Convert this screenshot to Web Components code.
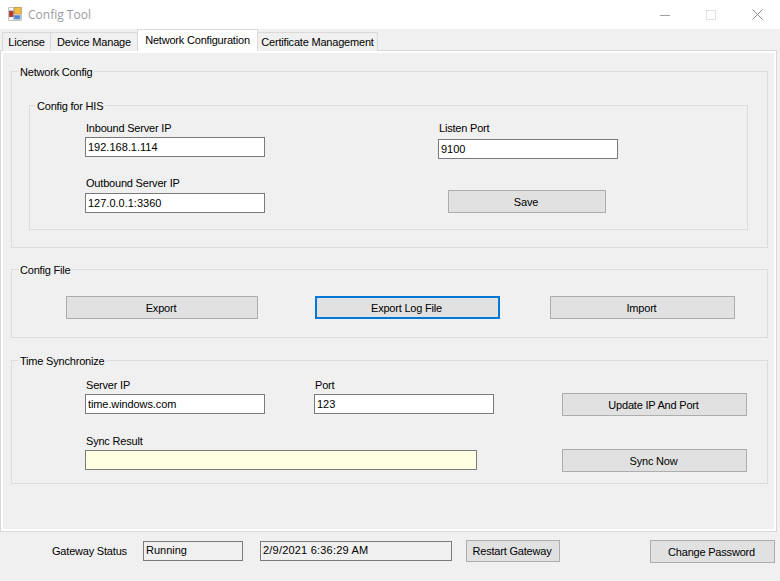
<!DOCTYPE html>
<html>
<head>
<meta charset="utf-8">
<title>Config Tool</title>
<style>
  html, body { margin: 0; height: 100%; background: #f0f0f0; }
  body { font: 11px/14px "Liberation Sans", Arial, sans-serif; letter-spacing: -0.2px; color: #000; overflow: hidden; }
</style>
</head>
<body>
<cfg-window>
  <cfg-titlebar>Config Tool</cfg-titlebar>
  <cfg-tabs>
    <cfg-tab style="width:49px">License</cfg-tab>
    <cfg-tab style="width:88px">Device Manage</cfg-tab>
    <cfg-tab active style="width:121px">Network Configuration</cfg-tab>
    <cfg-tab style="width:121px">Certificate Management</cfg-tab>
  </cfg-tabs>
  <cfg-panel>
    <cfg-group label="Network Config" style="height:184px">
      <cfg-group label="Config for HIS" style="--legend-offset:5px;height:132px;margin:20px 19px 0 17px">
        <cfg-row style="padding:9px 0 0 55px">
          <cfg-col style="width:180px">
            <cfg-field label="Inbound Server IP" value="192.168.1.114"></cfg-field>
            <cfg-field label="Outbound Server IP" value="127.0.0.1:3360" style="--label-gap:3px;margin-top:19px"></cfg-field>
          </cfg-col>
          <cfg-col style="width:180px;margin-left:173px">
            <cfg-field label="Listen Port" value="9100" style="--label-gap:4px"></cfg-field>
            <cfg-button style="width:158px;height:23px;margin:31px 0 0 10px">Save</cfg-button>
          </cfg-col>
        </cfg-row>
      </cfg-group>
    </cfg-group>
    <cfg-group label="Config File" style="height:76px;margin-top:14px">
      <cfg-row style="padding:20px 0 0 54px">
        <cfg-button style="width:192px;height:23px">Export</cfg-button>
        <cfg-button focused style="width:185px;height:23px;margin-left:57px">Export Log File</cfg-button>
        <cfg-button style="width:185px;height:23px;margin-left:50px">Import</cfg-button>
      </cfg-row>
    </cfg-group>
    <cfg-group label="Time Synchronize" style="height:131px;margin-top:15px">
      <cfg-row style="padding:11px 0 0 73px">
        <cfg-col style="width:409px">
          <cfg-row>
            <cfg-field label="Server IP" value="time.windows.com" style="--value-spacing:-.1px;width:180px"></cfg-field>
            <cfg-field label="Port" value="123" style="width:180px;margin-left:49px"></cfg-field>
          </cfg-row>
          <cfg-field label="Sync Result" tone="result" style="width:392px;margin-top:20px"></cfg-field>
        </cfg-col>
        <cfg-col style="margin-left:68px;padding-top:15px">
          <cfg-button style="width:185px;height:23px">Update IP And Port</cfg-button>
          <cfg-button style="width:185px;height:23px;margin-top:33px">Sync Now</cfg-button>
        </cfg-col>
      </cfg-row>
    </cfg-group>
  </cfg-panel>
  <cfg-statusbar>
    <cfg-caption style="width:91px">Gateway Status</cfg-caption>
    <cfg-readout style="width:100px">Running</cfg-readout>
    <cfg-readout style="width:192px;margin-left:17px;letter-spacing:.2px">2/9/2021 6:36:29 AM</cfg-readout>
    <cfg-button style="width:94px;height:22px;margin-left:14px">Restart Gateway</cfg-button>
    <cfg-button style="width:125px;height:23px;margin-left:90px">Change Password</cfg-button>
  </cfg-statusbar>
</cfg-window>

<script>
function define (name, css, html, init) {
  const template = document.createElement('template')
  template.innerHTML = `<style>${css}</style>${html}`
  class Element extends HTMLElement {
    constructor () {
      super()
      this.attachShadow({mode: 'open'})
      this.shadowRoot.appendChild(template.content.cloneNode(true))
    }
    connectedCallback () {
      if (init) init(this)
    }
  }
  window.customElements.define(name, Element)
}

define('cfg-window', `
  :host { display: flex; flex-direction: column; width: 780px; height: 581px; background: #f0f0f0; }
`, '<slot></slot>')

define('cfg-titlebar', `
  :host { display: flex; align-items: center; height: 29px; background: #fff; flex: none; }
  svg.icon { margin-left: 8px; flex: none; }
  .title { margin-left: 5px; font: 12px/16px "Open Sans", "Liberation Sans", sans-serif; letter-spacing: 0; color: #9c9c9c; flex: 1; }
  .ctl { width: 46px; height: 29px; display: flex; align-items: center; justify-content: center; flex: none; }
`, `
  <svg class="icon" width="15" height="15" viewBox="0 0 15 15">
    <path d="M.5 .5H13.5V13.5H.5ZM.5 3.5H6M5.5 .5V13.5" fill="#f4f4f4" stroke="#c4c4c4"/>
    <rect x="6.5" y=".5" width="6.5" height="6.5" fill="#f2bd3c" stroke="#c8a050"/>
    <rect x="1.5" y="4.5" width="3.5" height="5" fill="#c4302a" stroke="#a05048"/>
    <rect x="6.5" y="8.5" width="5.5" height="3.5" fill="#4a86d8" stroke="#7a9ac8"/>
  </svg>
  <span class="title"><slot></slot></span>
  <span class="ctl"><svg width="10" height="10" viewBox="0 0 10 10"><path d="M0 5.5H10" stroke="#a0a0a0"/></svg></span>
  <span class="ctl"><svg width="10" height="10" viewBox="0 0 10 10"><rect x=".5" y=".5" width="9" height="9" fill="none" stroke="#e2e2e2"/></svg></span>
  <span class="ctl"><svg width="11" height="11" viewBox="0 0 11 11"><path d="M.5 .5L10.5 10.5M10.5 .5L.5 10.5" stroke="#8a8a8a"/></svg></span>
`)

define('cfg-tabs', `
  :host { display: flex; align-items: flex-end; height: 22px; padding-left: 2px; flex: none; position: relative; z-index: 1; margin-bottom: -1px; }
`, '<slot></slot>')

define('cfg-tab', `
  :host { display: block; box-sizing: border-box; height: 19px; line-height: 19px; margin-left: -1px; border: 1px solid #d9d9d9; border-bottom: 0; white-space: nowrap; text-align: center; background: #f0f0f0; flex: none; }
  :host(:first-child) { margin-left: 0; }
  :host([active]) { height: 22px; line-height: 20px; background: #fff; position: relative; z-index: 1; }
`, '<slot></slot>')

define('cfg-panel', `
  :host { display: block; box-sizing: border-box; width: 777px; height: 482px; flex: none; padding: 13px 8px 0 10px; border: 1px solid #d9d9d9; box-shadow: inset 0 0 0 2px #fff; background: #f0f0f0; }
`, '<slot></slot>')

define('cfg-group', `
  :host { display: block; box-sizing: border-box; }
  fieldset { box-sizing: border-box; height: 100%; margin: 0; padding: 0; border: 1px solid #dcdcdc; min-width: 0; }
  legend { height: 14px; margin-left: var(--legend-offset, 6px); padding: 0 2px; line-height: 16px; }
`, '<fieldset><legend></legend><slot></slot></fieldset>', el => {
  el.shadowRoot.querySelector('legend').textContent = el.getAttribute('label')
})

define('cfg-row', ':host { display: flex; }', '<slot></slot>')
define('cfg-col', ':host { display: block; flex: none; }', '<slot></slot>')

define('cfg-field', `
  :host { display: block; flex: none; }
  .label { display: block; height: 14px; line-height: 14px; margin: 0 0 var(--label-gap, 2px) 1px; white-space: nowrap; }
  .box { box-sizing: border-box; height: 20px; line-height: 19px; padding: 0 2px; border: 1px solid #7a7a7a; background: #fff; letter-spacing: var(--value-spacing, 0); white-space: nowrap; overflow: hidden; }
  :host([tone=result]) .box { background: #ffffe1; }
`, '<span class="label"></span><div class="box"></div>', el => {
  el.shadowRoot.querySelector('.label').textContent = el.getAttribute('label')
  el.shadowRoot.querySelector('.box').textContent = el.getAttribute('value') || ''
})

define('cfg-button', `
  :host { display: flex; align-items: center; justify-content: center; box-sizing: border-box; padding-right: 2px; border: 1px solid #adadad; background: #e1e1e1; white-space: nowrap; flex: none; }
  :host([focused]) { border: 2px solid #0078d7; }
`, '<slot></slot>')

define('cfg-readout', `
  :host { display: block; box-sizing: border-box; height: 20px; line-height: 17px; margin-top: 1px; padding: 0 2px; border: 1px solid #7a7a7a; background: #f0f0f0; letter-spacing: 0; white-space: nowrap; flex: none; }
`, '<slot></slot>')

define('cfg-caption', `
  :host { display: block; line-height: 23px; white-space: nowrap; flex: none; }
`, '<slot></slot>')

define('cfg-statusbar', `
  :host { display: flex; align-items: flex-start; padding: 8px 0 0 52px; flex: none; }
`, '<slot></slot>')
</script>
</body>
</html>
